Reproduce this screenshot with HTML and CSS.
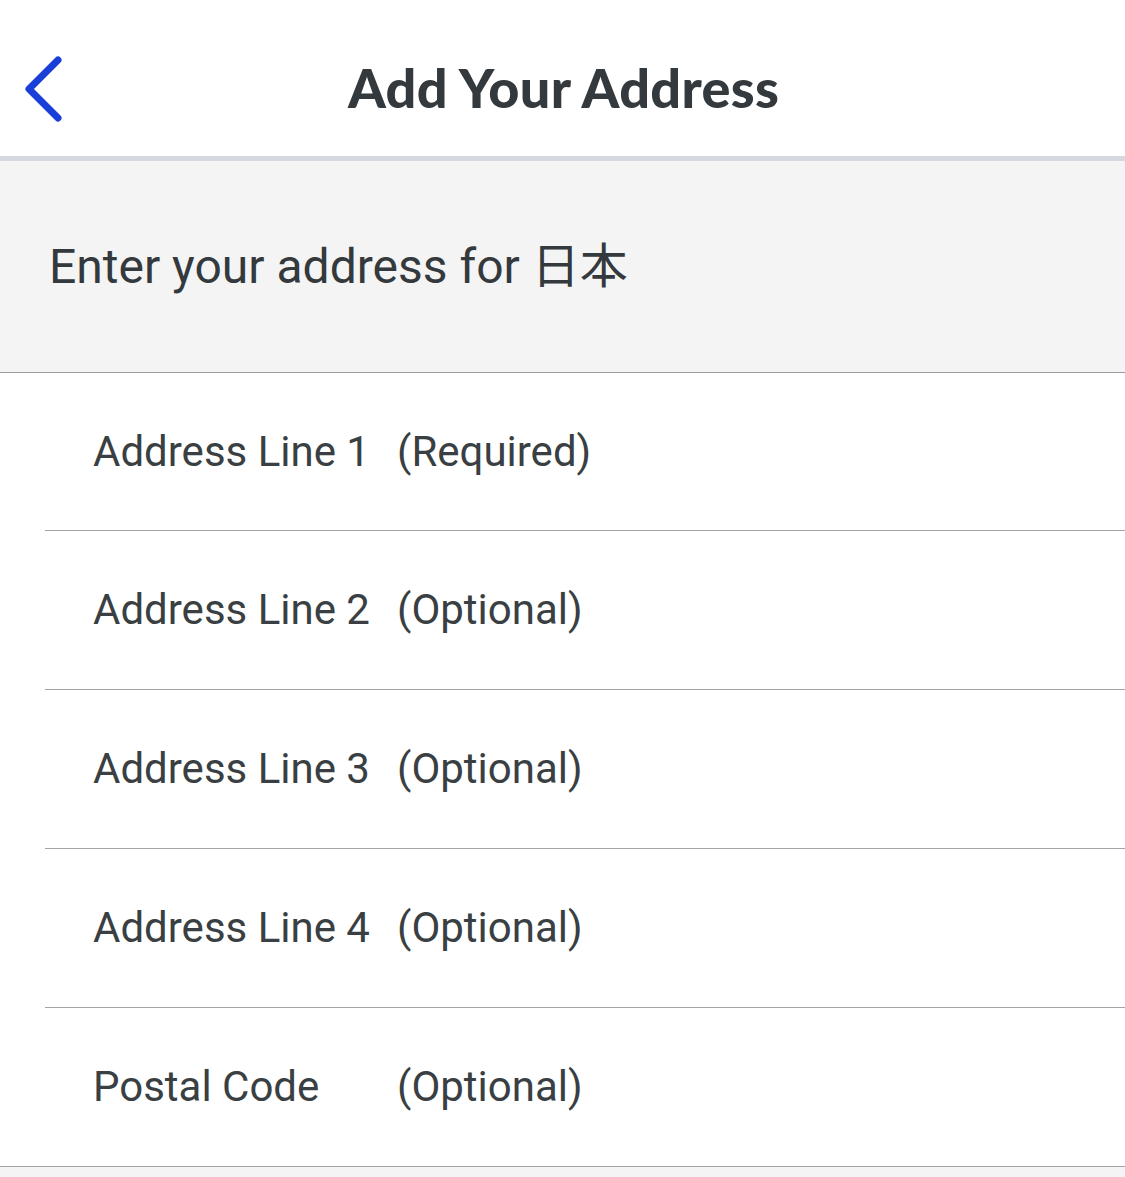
FILE: index.html
```html
<!DOCTYPE html>
<html lang="en">
<head>
<meta charset="utf-8">
<link rel="stylesheet" href="styles.css">
</head>
<body>
<div class="screen">
  <header class="topbar">
    <button class="back" aria-label="Back">
      <svg width="42" height="68" viewBox="0 0 42 68"><path d="M35 4 L6 33 L35 62" fill="none" stroke="#1a3fd8" stroke-width="7" stroke-linecap="round" stroke-linejoin="round"/></svg>
    </button>
    <h1 class="title">Add Your Address</h1>
  </header>
  <section class="intro">
    <p>Enter your address for 日本</p>
  </section>
  <ul class="fields">
    <li class="field"><span class="label">Address Line 1</span><span class="hint">(Required)</span></li>
    <li class="field"><span class="label">Address Line 2</span><span class="hint">(Optional)</span></li>
    <li class="field"><span class="label">Address Line 3</span><span class="hint">(Optional)</span></li>
    <li class="field"><span class="label">Address Line 4</span><span class="hint">(Optional)</span></li>
    <li class="field last"><span class="label">Postal Code</span><span class="hint">(Optional)</span></li>
  </ul>
  <div class="footer"></div>
</div>
</body>
</html>
```
FILE: styles.css
```css
* { box-sizing: border-box; }
html, body { margin: 0; padding: 0; background: #f4f4f4; }
.screen { width: 1125px; min-height: 1177px; display: flex; flex-direction: column; background: #f4f4f4; }
.topbar {
  height: 161px;
  background: #fff;
  border-bottom: 5px solid #d5d8df;
  display: flex;
  align-items: center;
  justify-content: center;
  position: relative;
}
.back {
  position: absolute;
  left: 23px;
  top: 56px;
  background: none;
  border: 0;
  padding: 0;
  display: flex;
}
.title {
  margin: 0;
  font-family: Lato, "Open Sans", sans-serif;
  font-weight: 900;
  font-size: 54px;
  color: #33393c;
  letter-spacing: 0.3px;
  padding-left: 2px;
  padding-top: 18px;
}
.intro {
  height: 212px;
  background: #f4f4f4;
  border-bottom: 1px solid #9c9c9c;
  display: flex;
  align-items: center;
  padding: 0 0 10px 49px;
}
.intro p {
  margin: 0;
  font-family: Roboto, "Noto Sans CJK JP", sans-serif;
  font-size: 48px;
  color: #33393c;
  font-weight: 400;
}
.fields { list-style: none; margin: 0; padding: 0; background: #fff; }
.field {
  height: 159px;
  margin-left: 45px;
  border-bottom: 1px solid #a4a4a4;
  display: flex;
  align-items: center;
  padding-left: 48px;
  padding-bottom: 1px;
  font-family: Roboto, sans-serif;
  font-size: 42px;
  color: #393f42;
}
.field:first-child { height: 158px; }
.field.last { margin-left: 0; padding-left: 93px; }
.label { width: 304px; }
.footer { flex: 1; background: #f4f4f4; }
```
